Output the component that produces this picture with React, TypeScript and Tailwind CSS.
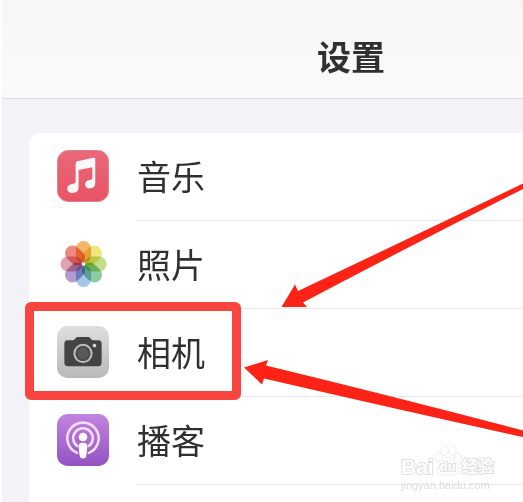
import { ReactNode } from 'react';

interface SettingsRow {
  id: string;
  label: string;
  icon: ReactNode;
  highlighted?: boolean;
}

function MusicIcon() {
  return (
    <svg viewBox="0 0 53 53" className="size-[52px]" aria-hidden="true">
      <defs>
        <linearGradient id="music-bg" x1="0" y1="0" x2="0" y2="1">
          <stop offset="0" stopColor="#e8697a" />
          <stop offset="1" stopColor="#ea5266" />
        </linearGradient>
      </defs>
      <rect x="0.5" y="0.5" width="52" height="52" rx="11" fill="url(#music-bg)" stroke="#e27f8b" />
      <path
        d="M19 14 Q19 11.8 20.7 11.4 L37 8 Q39 7.6 39 9.5 V33.5 C39 37.4 36.7 39.2 33.4 39.2 C30.5 39.2 28.6 37.6 28.6 35.2 C28.6 32.4 30.6 31 33.6 30.6 C35.4 30.3 36 29.8 36 28.4 V17.5 L22 20.3 V38 C22 41.8 19.4 43.8 15.8 43.8 C12.6 43.8 10.4 42 10.4 39.4 C10.4 36.6 12.6 35 15.8 34.6 C18.2 34.2 19 33.6 19 32.2 Z"
        fill="#fff8f8"
      />
    </svg>
  );
}

// Petal colours, clockwise from the top
const petals = [
  '#f2b158',
  '#f0e373',
  '#bedc80',
  '#84c79c',
  '#9ac2e8',
  '#ab93cc',
  '#df9bac',
  '#ec7f73',
];

function PhotosIcon() {
  return (
    <svg viewBox="0 0 53 53" className="size-[52px]" aria-hidden="true">
      {petals.map((color, i) => (
        <rect
          key={color}
          x="19.3"
          y="3"
          width="15.4"
          height="22.5"
          rx="7.7"
          fill={color}
          opacity="0.92"
          transform={`rotate(${i * 45} 27 26.5)`}
          className="mix-blend-multiply"
        />
      ))}
      <circle cx="27" cy="26.5" r="1.8" fill="#f7f3ee" />
    </svg>
  );
}

function CameraIcon() {
  return (
    <svg viewBox="0 0 53 53" className="size-[52px]" aria-hidden="true">
      <defs>
        <linearGradient id="camera-bg" x1="0" y1="0" x2="0" y2="1">
          <stop offset="0" stopColor="#dedede" />
          <stop offset="1" stopColor="#b9b9b9" />
        </linearGradient>
      </defs>
      <rect width="53" height="53" rx="11" fill="url(#camera-bg)" />
      <path
        d="M11 14.5 H16.5 C18 14.5 19 11.2 21 11.2 H32 C34 11.2 35 14.5 36.5 14.5 H42 Q45.5 14.5 45.5 18 V37.5 Q45.5 41 42 41 H11 Q7.5 41 7.5 37.5 V18 Q7.5 14.5 11 14.5 Z"
        fill="#444446"
      />
      <circle cx="26.5" cy="28" r="8.8" fill="#4a4a4c" stroke="#c0c0c0" strokeWidth="2" />
      <circle cx="26.5" cy="28" r="5.8" fill="#58585a" />
      <circle cx="38.2" cy="20" r="1.8" fill="#dadada" />
    </svg>
  );
}

function PodcastsIcon() {
  return (
    <svg viewBox="0 0 53 53" className="size-[52px]" aria-hidden="true">
      <defs>
        <linearGradient id="podcasts-bg" x1="0" y1="0" x2="0" y2="1">
          <stop offset="0" stopColor="#c283e0" />
          <stop offset="1" stopColor="#9453c0" />
        </linearGradient>
      </defs>
      <rect width="53" height="53" rx="11" fill="url(#podcasts-bg)" />
      <g fill="none" stroke="#f0def8" strokeWidth="2.6" strokeLinecap="round">
        <path d="M20.5 39.6 A16 16 0 1 1 32.5 39.6" />
        <path d="M20.5 32.6 A10 10 0 1 1 32.5 32.6" />
      </g>
      <circle cx="26.5" cy="23.4" r="4.4" fill="#fff" />
      <path
        d="M26.5 29.2 C29.8 29.2 31.2 30.6 31 33.4 L30 41.9 C29.7 44.4 28.6 45.4 26.5 45.4 C24.4 45.4 23.3 44.4 23 41.9 L22 33.4 C21.8 30.6 23.2 29.2 26.5 29.2 Z"
        fill="#fff"
      />
    </svg>
  );
}

const rows: SettingsRow[] = [
  { id: 'music', label: '音乐', icon: <MusicIcon /> },
  { id: 'photos', label: '照片', icon: <PhotosIcon /> },
  { id: 'camera', label: '相机', icon: <CameraIcon />, highlighted: true },
  { id: 'podcasts', label: '播客', icon: <PodcastsIcon /> },
];

function SettingsItem({ row }: { row: SettingsRow }) {
  return (
    <li className="relative">
      <a href={`#${row.id}`} className="flex items-center gap-7 pl-7">
        <span className="shrink-0 pb-0.5">{row.icon}</span>
        <span className="flex h-[88px] flex-1 items-center border-b border-[#e8e8ea] pb-0.5 text-[34px] leading-10 text-[#303030]">
          {row.label}
        </span>
      </a>
      {row.highlighted && (
        <div className="pointer-events-none absolute -top-[7px] -left-1 z-10 h-[98px] w-[216px] rounded-md border-[9px] border-[#f8453f]" />
      )}
    </li>
  );
}

// Pointers towards the highlighted row
function Arrows() {
  return (
    <svg
      viewBox="0 0 523 502"
      className="pointer-events-none absolute top-0 left-0 z-20 h-[502px] w-[523px]"
      fill="#fb2216"
      aria-hidden="true"
    >
      <path d="M281.5 307 L295 284.5 L298 291 Q410 238 523 183.5 V189 Q410 246 303 302.5 L307 307 Z" />
      <path d="M244 367.5 L268 360 L266 365.5 Q400 398 523 430.5 V437 Q400 410 264 378.5 L262 384.5 Z" />
    </svg>
  );
}

function Watermark() {
  return (
    <div className="pointer-events-none absolute top-[445px] left-[401px] z-30 w-max font-['Liberation_Sans','Noto_Sans_CJK_SC',sans-serif] whitespace-nowrap text-white">
      <div className="flex h-8 items-end font-bold [paint-order:stroke] [-webkit-text-stroke:2px_#e0e0e0]">
        <span className="text-[21px] leading-5">Bai</span>
        <span className="relative h-8 w-7">
          <svg
            viewBox="0 0 28 32"
            className="absolute inset-0 h-8 w-7"
            fill="#fff"
            stroke="#dedede"
            aria-hidden="true"
          >
            <ellipse cx="4.5" cy="12" rx="3.3" ry="4.5" />
            <ellipse cx="10.5" cy="5.5" rx="3.3" ry="4.5" />
            <ellipse cx="18.5" cy="5.5" rx="3.3" ry="4.5" />
            <ellipse cx="24" cy="13" rx="3.3" ry="4.5" />
            <path d="M14 12.5 C18 12.5 19 17 22 19.5 C25.5 22.5 26.5 30 20 30 C17 30 16 29 14 29 C12 29 11 30 8 30 C1.5 30 2.5 22.5 6 19.5 C9 17 10 12.5 14 12.5 Z" />
          </svg>
          <span className="absolute inset-x-0 bottom-0.5 text-center text-[13px] leading-4">du</span>
        </span>
        <span className="text-[16px] leading-5">经验</span>
      </div>
      <p className="text-[11px] leading-4 text-[#dedede]">jingyan.baidu.com</p>
    </div>
  );
}

export default function App() {
  return (
    <div className="relative flex min-h-screen flex-col overflow-hidden border-l-2 border-white bg-[#f3f3f7] font-['Noto_Sans_CJK_SC',sans-serif]">
      <header className="flex h-[99px] items-center justify-center border-b border-[#dcdcdf] bg-linear-to-b from-[#f6f6f7] to-[#fafafa] pt-3.5 pl-[177px]">
        <h1 className="text-[34px] leading-10 font-bold text-[#303030]">设置</h1>
      </header>

      <main className="flex flex-1 flex-col pt-[34px] pl-[27px]">
        <ul className="flex-1 rounded-tl-xl bg-white">
          {rows.map(row => (
            <SettingsItem key={row.id} row={row} />
          ))}
        </ul>
      </main>

      <div className="absolute top-0 -left-0.5">
        <Arrows />
        <Watermark />
      </div>
    </div>
  );
}
